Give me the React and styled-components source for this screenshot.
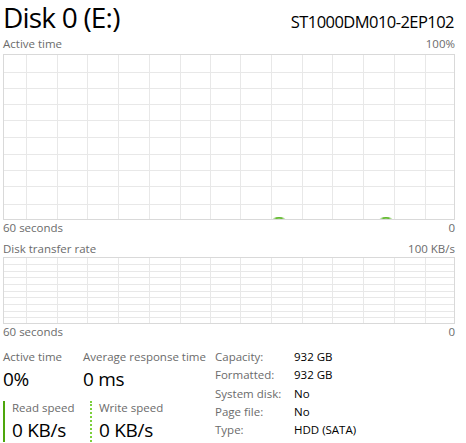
import React from "react";
import styled, { createGlobalStyle } from "styled-components";

const Global = createGlobalStyle`
  html, body { margin: 0; padding: 0; background: #fff; }
  body { font-family: "Open Sans", "Noto Sans", sans-serif; color: #000; overflow: hidden; }
`;

const Page = styled.div`
  width: 466px;
  height: 443px;
  padding: 0 11px 0 3px;
  box-sizing: border-box;
  overflow: hidden;
`;

const Header = styled.div`
  display: flex;
  align-items: baseline;
  justify-content: space-between;
  height: 34px;
`;

const Title = styled.div`
  font-size: 28px;
  line-height: 34px;
  font-weight: 400;
  letter-spacing: -0.8px;
  white-space: nowrap;
`;

const Model = styled.div`
  font-size: 16.5px;
  line-height: 34px;
  letter-spacing: -0.55px;
  margin-right: 1px;
  white-space: nowrap;
`;

const Caption = styled.div`
  display: flex;
  justify-content: space-between;
  font-size: 11.5px;
  line-height: 16px;
  color: #6b6b6b;
  margin-top: ${(p) => p.$mt || 0}px;
`;

const ChartBox = styled.div`
  height: ${(p) => p.$h}px;
  border: 1px solid #d9d9d9;
  box-sizing: border-box;
  margin-top: ${(p) => p.$mt || 0}px;
  svg { display: block; }
`;

const vLines = [22, 53, 83, 114, 145, 176, 206, 236, 267, 298, 328, 359, 390, 421];

function Grid({ width, height, rows, marks = [] }) {
  return (
    <svg width={width} height={height}>
      <defs>
        <linearGradient id="fade" x1="0" x2="1" y1="0" y2="0">
          <stop offset="0" stopColor="#5fb82a" stopOpacity="0.2" />
          <stop offset="0.3" stopColor="#5fb82a" stopOpacity="1" />
          <stop offset="0.7" stopColor="#5fb82a" stopOpacity="1" />
          <stop offset="1" stopColor="#5fb82a" stopOpacity="0.2" />
        </linearGradient>
      </defs>
      {vLines.map((x) => (
        <line key={"v" + x} x1={x + 0.5} y1={0} x2={x + 0.5} y2={height} stroke="#e8e8e8" strokeWidth="1" />
      ))}
      {rows.map((y) => (
        <line key={"h" + y} x1={0} y1={y + 0.5} x2={width} y2={y + 0.5} stroke="#e8e8e8" strokeWidth="1" />
      ))}
      {marks.map((x) => (
        <path
          key={"m" + x}
          d={`M${x} ${height} Q${x + 6} ${height - 2.2} ${x + 12} ${height}`}
          fill="none"
          stroke="url(#fade)"
          strokeWidth="1.6"
        />
      ))}
    </svg>
  );
}

const Stats = styled.div`
  display: flex;
  margin-top: 9px;
`;

const LeftStats = styled.div`
  display: flex;
  flex-direction: column;
  width: 212px;
`;

const StatRow = styled.div`
  display: flex;
  margin-top: ${(p) => p.$mt || 0}px;
`;

const Stat = styled.div`
  width: ${(p) => p.$w}px;
  flex: none;
`;

const SpeedStat = styled.div`
  width: ${(p) => p.$w}px;
  flex: none;
  box-sizing: border-box;
  padding-left: 7px;
  border-left: 2px ${(p) => (p.$dotted ? "dotted #7ccf3c" : "solid #4da60c")};
`;

const StatLabel = styled.div`
  font-size: 11.5px;
  line-height: ${(p) => p.$lh || 16}px;
  color: #6b6b6b;
  white-space: nowrap;
`;

const StatValue = styled.div`
  font-size: 19px;
  line-height: 24px;
  letter-spacing: -0.3px;
  margin-top: ${(p) => p.$mt || 0}px;
  white-space: nowrap;
`;

const Props = styled.div`
  display: grid;
  grid-template-columns: 79px auto;
  grid-auto-rows: 18.3px;
  margin-top: -1px;
  font-size: 11.5px;
  line-height: 18.3px;
`;

const PropKey = styled.div`
  color: #6b6b6b;
`;

const PropVal = styled.div`
  color: #000;
`;

const props = [
  ["Capacity:", "932 GB"],
  ["Formatted:", "932 GB"],
  ["System disk:", "No"],
  ["Page file:", "No"],
  ["Type:", "HDD (SATA)"],
];

export default function App() {
  return (
    <Page>
      <Global />
      <Header>
        <Title>Disk 0 (E:)</Title>
        <Model>ST1000DM010-2EP102</Model>
      </Header>
      <Caption $mt={2}>
        <span>Active time</span>
        <span>100%</span>
      </Caption>
      <ChartBox $h={166} $mt={2}>
        <Grid width={450} height={164} rows={[17, 33, 49, 65, 82, 99, 115, 131, 149]} marks={[269, 376]} />
      </ChartBox>
      <Caption>
        <span>60 seconds</span>
        <span>0</span>
      </Caption>
      <Caption $mt={5}>
        <span>Disk transfer rate</span>
        <span>100 KB/s</span>
      </Caption>
      <ChartBox $h={67}>
        <Grid width={450} height={65} rows={[6, 13, 19, 26, 33, 39, 46, 53, 59]} />
      </ChartBox>
      <Caption>
        <span>60 seconds</span>
        <span>0</span>
      </Caption>
      <Stats>
        <LeftStats>
          <StatRow>
            <Stat $w={80}>
              <StatLabel>Active time</StatLabel>
              <StatValue $mt={2}>0%</StatValue>
            </Stat>
            <Stat $w={132}>
              <StatLabel>Average response time</StatLabel>
              <StatValue $mt={2}>0 ms</StatValue>
            </Stat>
          </StatRow>
          <StatRow $mt={10}>
            <SpeedStat $w={87}>
              <StatLabel $lh={13}>Read speed</StatLabel>
              <StatValue $mt={4}>0 KB/s</StatValue>
            </SpeedStat>
            <SpeedStat $w={120} $dotted>
              <StatLabel $lh={13}>Write speed</StatLabel>
              <StatValue $mt={4}>0 KB/s</StatValue>
            </SpeedStat>
          </StatRow>
        </LeftStats>
        <Props>
          {props.map(([k, v]) => (
            <React.Fragment key={k}>
              <PropKey>{k}</PropKey>
              <PropVal>{v}</PropVal>
            </React.Fragment>
          ))}
        </Props>
      </Stats>
    </Page>
  );
}
